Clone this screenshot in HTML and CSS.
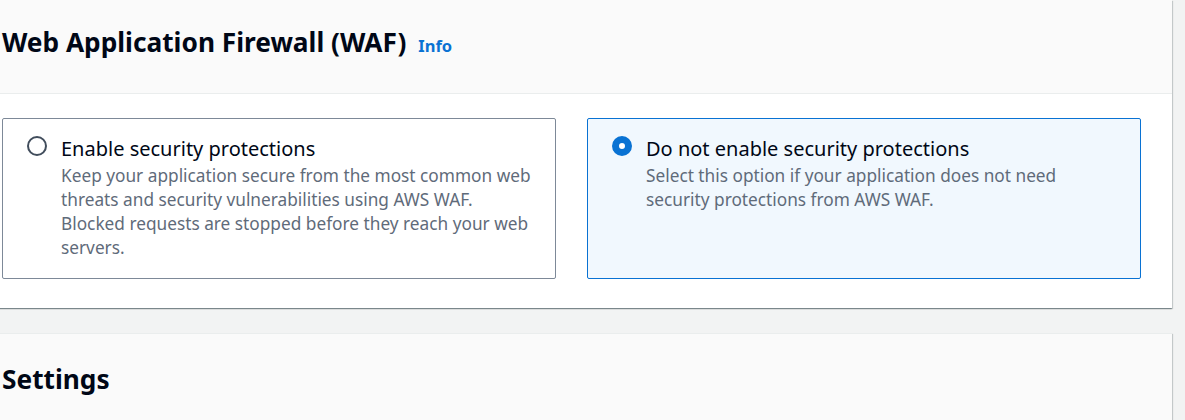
FILE: index.html
```html
<!DOCTYPE html>
<html>
<head>
	<title>Web Application Firewall</title>
	<meta charset="utf-8">
	<link rel="stylesheet" href="styles.css">
</head>

<body>
	<div class="container">
		<div class="header">
			<h2>Web Application Firewall (WAF)</h2>
			<a class="info" href="#">Info</a>
		</div>
		<div class="content">
			<div class="tiles">
				<div class="tile">
					<span class="radio"></span>
					<div class="tile-text">
						<div class="label">Enable security protections</div>
						<div class="desc">Keep your application secure from the most common web threats and security vulnerabilities using AWS WAF. Blocked requests are stopped before they reach your web servers.</div>
					</div>
				</div>
				<div class="tile selected">
					<span class="radio checked"></span>
					<div class="tile-text">
						<div class="label">Do not enable security protections</div>
						<div class="desc">Select this option if your application does not need security protections from AWS WAF.</div>
					</div>
				</div>
			</div>
		</div>
	</div>

	<div class="container next">
		<div class="header">
			<h2>Settings</h2>
		</div>
	</div>
</body>
</html>
```

FILE: styles.css
```css
body{
	margin: 0;
	background: #f2f3f3;
	font-family: 'Noto Sans', 'Open Sans', sans-serif;
	color: #000716;
}

.container{
	margin-left: -18px;
	width: 1190px;
	background: #fff;
	box-shadow: 0 1px 1px 0 rgba(0, 28, 36, 0.3), 1px 1px 1px 0 rgba(0, 28, 36, 0.15), -1px 1px 1px 0 rgba(0, 28, 36, 0.15);
}

.header{
	display: flex;
	align-items: baseline;
	gap: 12px;
	height: 94px;
	box-sizing: border-box;
	padding: 25px 20px 0 20px;
	background: #fafafa;
	border-bottom: 1px solid #eaeded;
}

.header h2{
	margin: 0;
	font-size: 26.25px;
	line-height: 34px;
	font-weight: 700;
}

.info{
	font-size: 16.5px;
	font-weight: 700;
	color: #0972d3;
	text-decoration: none;
}

.content{
	padding: 24px 31px 29px 20px;
}

.tiles{
	display: grid;
	grid-template-columns: 554px 554px;
	gap: 31px;
}

.tile{
	display: flex;
	align-items: flex-start;
	gap: 14px;
	height: 161px;
	box-sizing: border-box;
	padding: 14px 20px 0 24px;
	border: 1px solid #7d8998;
	border-radius: 2px;
}

.tile.selected{
	border-color: #0972d3;
	background: #f1f8fe;
}

.radio{
	flex: none;
	width: 20px;
	height: 20px;
	margin-top: 3px;
	box-sizing: border-box;
	border: 2px solid #414d5c;
	border-radius: 50%;
	background: #fff;
}

.radio.checked{
	border: 7px solid #0972d3;
}

.label{
	font-size: 20px;
	line-height: 31px;
}

.desc{
	font-size: 17.25px;
	line-height: 24px;
	color: #5f6b7a;
}

.next{
	margin-top: 25px;
	border-top: 1px solid #eaeded;
}

.next .header{
	padding-top: 28px;
}
```
